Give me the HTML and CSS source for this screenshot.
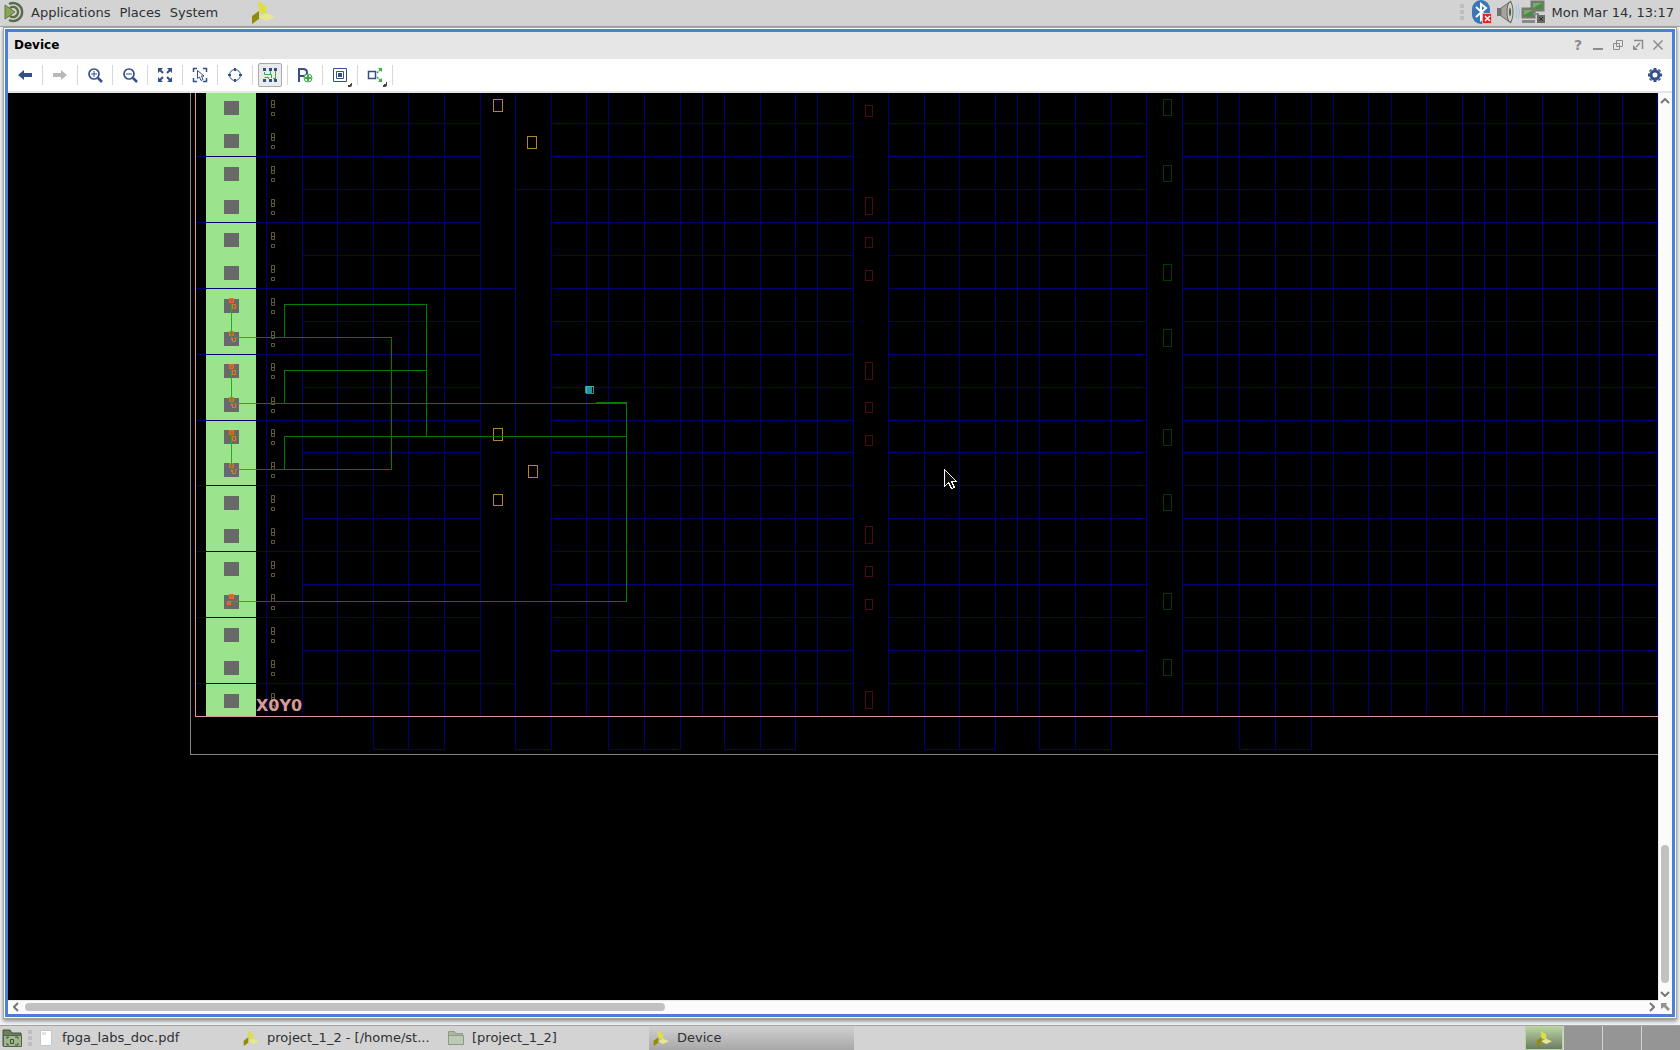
FILE: index.html
```html
<!DOCTYPE html>
<html lang="en">
<head>
<meta charset="utf-8">
<title>Device</title>
<link rel="stylesheet" href="styles.css">
</head>
<body>
<svg class="defs" aria-hidden="true">
  <defs>
    <symbol id="logo" viewBox="0 0 24 24">
      <path fill="#dcdf45" d="M7 1l8 5 1 9-8-3z"/>
      <path fill="#8f8d05" d="M1 16l7-5v8l-7 5z"/>
      <path fill="#e7e792" d="M8 17l7-4 9 4-9 4z"/>
    </symbol>
    <g id="box"><path d="M.5.5h3v4h-3zM.5 4.500h3v3h-3zM.5 12.500h3v3h-3z"/></g>
    <g id="pair"><path fill="#696969" d="M0 0h15v14H0z"/><use href="#box" class="bel" x="47" y="-1"/></g>
    <g id="pin"><path fill="#b8653a" stroke="#e07028" d="M.5.5h4v4h-4z"/><path fill="none" stroke="#e87722" d="M3.500 6.500h3v4h-3zM2.500 6v3"/></g>
  </defs>
</svg>

<header class="panel top">
  <nav class="menu">
    <svg class="mate" viewBox="0 0 22 22"><path d="M5 3a9 9 0 1 1 0 16M6 7a5 5 0 1 1 0 8" fill="none" stroke="#5c6b4c" stroke-width="2.500"/><path d="M1 4l10 7-10 7z" fill="#87a556" stroke="#5f7a3c"/></svg>
    <a href="#">Applications</a><a href="#">Places</a><a href="#">System</a>
    <svg class="launcher"><use href="#logo"/></svg>
  </nav>
  <div class="tray">
    <span class="grip"></span>
    <svg class="bt" viewBox="0 0 22 24"><rect x="1" y="0" width="18" height="24" rx="9" fill="#3b76b9"/><path d="M5 7l10 9-5 4V4l5 4-10 9" fill="none" stroke="#fff" stroke-width="2"/><path fill="#dc2626" stroke="#f5b5b5" d="M11.500 13.500h9v10h-9z"/><path d="M14 16l5 5m0-5l-5 5" stroke="#fff" stroke-width="1.500"/></svg>
    <svg class="snd" viewBox="0 0 24 24"><path d="M1 8h5v8H1z" fill="#737373"/><path d="M5 8l10-7v22L5 16z" fill="#a5a59f" stroke="#73736e"/><ellipse cx="14" cy="12" rx="3" ry="10" fill="#cfcfca" stroke="#66665f"/><ellipse cx="14" cy="12" rx="1" ry="4" fill="#55554f"/><path d="M20 6q2 6 0 12M22 4q3 8 0 16" fill="none" stroke="#a9c0e0"/></svg>
    <svg class="net" viewBox="0 0 24 24"><path d="M10.500 1.500h12v9h-12zM1.500 8.500h12v9h-12z" fill="#4d8a45" stroke="#777a73" stroke-width="2"/><path d="M3 10h9l-9 5zM12 3h9l-9 5z" fill="#79ab6c"/><path d="M1 20h13v3H1zM12 13h6v2h-6z" fill="#888a85"/><path d="M16 15h8v8h-8z" fill="#6a6c67"/><path d="M18 17l4 4m0-4l-4 4" stroke="#333"/></svg>
    <time>Mon Mar 14, 13:17</time>
  </div>
</header>

<main class="desktop">
  <section class="window">
    <div class="titlebar">
      <h1>Device</h1>
      <div class="controls">
        <button aria-label="Help"><b>?</b></button>
        <button aria-label="Minimize"><svg viewBox="0 0 12 12"><path d="M1 10h10" stroke-width="2"/></svg></button>
        <button aria-label="Restore"><svg viewBox="0 0 12 12"><path d="M4.500 1.500h6v6h-6zM1.500 4.500h6v6h-6z"/></svg></button>
        <button aria-label="Float"><svg viewBox="0 0 12 12"><path d="M2 1.500h8.500V10M8 4L4 8" stroke-width="1.500"/><path d="M1 6v5h5z" class="solid"/></svg></button>
        <button aria-label="Close"><svg viewBox="0 0 12 12"><path d="M1.500 1.500l9 9m0-9l-9 9" stroke-width="1.500"/></svg></button>
      </div>
    </div>

    <div class="toolbar">
      <div class="tool"><button aria-label="Back"><svg viewBox="0 0 16 16"><path class="f" d="M1 8l6-5v3h8v4H7v3z"/></svg></button></div>
      <div class="tool"><button aria-label="Forward" disabled><svg viewBox="0 0 16 16"><path fill="#b8b8b8" d="M15 8L9 3v3H1v4h8v3z"/></svg></button></div>
      <div class="tool"><button aria-label="Zoom In"><svg viewBox="0 0 16 16"><circle class="s" cx="7" cy="7" r="5" stroke-width="1.700"/><path class="s" d="M7 4v6M4 7h6"/><path class="s" stroke-width="2.500" d="M11 11l4 4"/></svg></button></div>
      <div class="tool"><button aria-label="Zoom Out"><svg viewBox="0 0 16 16"><circle class="s" cx="7" cy="7" r="5" stroke-width="1.700"/><path class="s" d="M4 7h6"/><path class="s" stroke-width="2.500" d="M11 11l4 4"/></svg></button></div>
      <div class="tool"><button aria-label="Zoom Fit"><svg viewBox="0 0 16 16"><path class="f" d="M1 1h5L1 6zM15 1v5l-5-5zM1 15v-5l5 5zM15 15h-5l5-5z"/><path class="s" stroke-width="2" d="M3 3l3 3M13 3l-3 3M3 13l3-3M13 13l-3-3"/></svg></button></div>
      <div class="tool"><button aria-label="Zoom to Selection"><svg viewBox="0 0 16 16"><path class="s" stroke-width="1.500" d="M1.500 5V1.500H5M11 1.500h3.500V5M1.500 11v3.500H5M11 14.500h3.500V11"/><path class="s" d="M5.500 3.500v8l2-1.500 1.500 3.500 2-1L9.500 9h2.500z"/></svg></button></div>
      <div class="tool"><button aria-label="Autofit Selection"><svg viewBox="0 0 16 16"><circle class="s" cx="8" cy="8" r="5.500"/><path class="s" stroke-width="2" d="M8 1v3M8 12v3M1 8h3M12 8h3"/></svg></button></div>
      <div class="tool"><button class="pressed" aria-label="Routing Resources"><svg viewBox="0 0 16 16"><path class="f" d="M1 1h3v3H1zM7 1h3v3H7zM12 1h3v3h-3zM1 12h3v3H1zM7 12h3v3H7zM12 12h3v3h-3z"/><path class="g" d="M2.500 5v2.500h7V11M2.500 10.500h4V12M5 10.500v-1M8.500 4v4M13.500 4v8M11 11.500h3"/></svg></button></div>
      <div class="tool"><button aria-label="Draw Pblock"><svg viewBox="0 0 16 16"><path class="s" stroke-width="2" d="M2 15V2h4q4 0 4 3.500T6 9H2"/><circle cx="11" cy="11" r="4" fill="#fff" stroke="#39a845"/><path class="g" stroke-width="2" d="M11 8v6M8 11h6"/></svg></button></div>
      <div class="tool"><button class="menu-btn" aria-label="Layers"><svg viewBox="0 0 16 16"><path class="s" d="M1.500 1.500h13v13h-13zM4.500 4.500h7v7h-7z"/><path class="f" d="M6 6h4v4H6z"/></svg></button></div>
      <div class="tool"><button class="menu-btn" aria-label="Connections"><svg viewBox="0 0 16 16"><path class="s" stroke-width="1.500" d="M1.500 4.500h7v7h-7z"/><path class="g" stroke-width="1.500" stroke-dasharray="2 1" d="M10 6l4-4M10 10l4 4"/><path fill="#39b045" d="M11 1h4v4zM15 11v4h-4z"/></svg></button></div>
      <button class="settings" aria-label="Settings"><svg viewBox="0 0 16 16"><circle class="s" cx="8" cy="8" r="4" stroke-width="3"/><path class="s" stroke-width="3" d="M8 1v2M8 13v2M1 8h2M13 8h2M3 3l1 1M12 12l1 1M3 13l1-1M12 4l1-1"/></svg></button>
    </div>

    <div class="view">
      <div class="canvas">
        <svg class="device" role="img" aria-label="Device floorplan">
          <g transform="translate(-8 -93)">
            <path fill="#9be48c" d="M206 93h50v623h-50z"/>
            <g class="grid">
              <path d="M266.500 93V716M302.500 93V716M337.500 93V716M373.500 93V749M408.500 93V749M444.500 93V749M480.500 93V716M515.500 93V749M551.500 93V749M586.500 93V716M608.500 93V749M644.500 93V749M680.500 93V749M702.500 93V716M724.500 93V749M760.500 93V749M795.500 93V749M817.500 93V716M853.500 93V716M888.500 93V716M924.500 93V749M959.500 93V749M995.500 93V749M1017.500 93V716M1039.500 93V749M1075.500 93V749M1111.500 93V749M1146.500 93V716M1182.500 93V716M1217.500 93V716M1239.500 93V749M1275.500 93V749M1311.500 93V749M1333.500 93V716M1368.500 93V716M1391.500 93V716M1426.500 93V716M1462.500 93V716M1484.500 93V716M1506.500 93V716M1542.500 93V716M1577.500 93V716M1599.500 93V716M1622.500 93V716M1657.500 93V716"/>
              <path d="M373 749.500h72M515 749.500h37M608 749.500h73M724 749.500h72M924 749.500h72M1039 749.500h73M1239 749.500h73"/>
              <path d="M302 123.500H480M302 189.500H480M302 255.500H480M302 321.500H480M302 387.500H480M302 452.500H480M302 518.500H480M302 584.500H480M302 650.500H480"/>
              <path d="M195 156.500H480M195 222.500H480M195 288.500H515M195 354.500H480M195 420.500H480M195 485.500H480M195 551.500H480M195 617.500H480M195 683.500H515M515 189.500h36"/>
              <path d="M551 123.500H853M551 156.500H853M551 189.500H853M551 222.500H853M551 255.500H853M551 288.500H853M551 321.500H853M551 354.500H853M551 387.500H853M551 420.500H853M551 452.500H853M551 485.500H853M551 518.500H853M551 551.500H853M551 584.500H853M551 617.500H853M551 650.500H853M551 683.500H853"/>
              <path d="M888 123.500h258M888 156.500h258M888 189.500h258M853 222.500h329M888 255.500h258M888 288.500h258M888 321.500h258M888 354.500h258M888 387.500h258M888 420.500h258M888 452.500h258M888 485.500h258M888 518.500h258M853 551.500h329M888 584.500h258M888 617.500h258M888 650.500h258M888 683.500h258"/>
              <path d="M1182 123.500h476M1182 156.500h476M1182 189.500h476M1182 222.500h476M1182 255.500h476M1182 288.500h476M1182 321.500h476M1182 354.500h476M1182 387.500h476M1182 420.500h476M1182 452.500h476M1182 485.500h476M1182 518.500h476M1182 551.500h476M1182 584.500h476M1182 617.500h476M1182 650.500h476M1182 683.500h476"/>
            </g>
            <use href="#pair" x="224" y="101"/><use href="#pair" x="224" y="134"/><use href="#pair" x="224" y="167"/><use href="#pair" x="224" y="200"/><use href="#pair" x="224" y="233"/><use href="#pair" x="224" y="266"/><use href="#pair" x="224" y="299"/><use href="#pair" x="224" y="332"/><use href="#pair" x="224" y="364"/><use href="#pair" x="224" y="398"/><use href="#pair" x="224" y="430"/><use href="#pair" x="224" y="463"/><use href="#pair" x="224" y="496"/><use href="#pair" x="224" y="529"/><use href="#pair" x="224" y="562"/><use href="#pair" x="224" y="595"/><use href="#pair" x="224" y="628"/><use href="#pair" x="224" y="661"/><use href="#pair" x="224" y="694"/>
            <use href="#pin" x="229" y="298"/><use href="#pin" x="229" y="331"/><use href="#pin" x="229" y="364"/><use href="#pin" x="229" y="397"/><use href="#pin" x="229" y="430"/><use href="#pin" x="229" y="463"/>
            <path fill="#c9682f" stroke="#e07028" d="M229.500 594.500h4v4h-4zM227.500 601.500h3v3h-3z"/>
            <path class="ram" d="M493.500 99.500h9v12h-9zM527.500 136.500h9v12h-9zM493.500 428.500h9v12h-9zM528.500 465.500h9v12h-9zM493.500 494.500h9v11h-9z"/>
            <path class="clk" d="M865.500 105.500h7v11h-7zM865.500 197.500h7v17h-7zM865.500 237.500h7v10h-7zM865.500 270.500h7v10h-7zM865.500 362.500h7v17h-7zM865.500 402.500h7v10h-7zM865.500 435.500h7v10h-7zM865.500 526.500h7v17h-7zM865.500 566.500h7v10h-7zM865.500 599.500h7v10h-7zM865.500 691.500h7v17h-7z"/>
            <path class="dsp" d="M1163.500 99.500h8v16h-8zM1163.500 165.500h8v16h-8zM1163.500 264.500h8v16h-8zM1163.500 329.500h8v17h-8zM1163.500 429.500h8v16h-8zM1163.500 494.500h8v16h-8zM1163.500 593.500h8v16h-8zM1163.500 659.500h8v16h-8z"/>
            <path class="net-line" d="M284.500 337V304.500H426.500V436M231 337.500H391.500V469.500H231M284.500 403V370.500H426M231 403.500H626M596 402.500H626.500V601.500H231M284.500 469V436.500H626"/>
            <path class="net-pin" d="M231.500 304V337M231.500 370V403M231.500 436V469M231 337.500h25M231 403.500h25M231 469.500h25M231 601.500h25"/>
            <path fill="#239393" d="M585 386h7v7h-7zM586 393h8v1h-8zM593 386h1v8h-1z"/><path fill="none" stroke="#37baba" d="M586.500 386v7M586 386.500h8"/>
            <path fill="none" stroke="#d89999" d="M195.500 93V716.500H1658"/>
            <path fill="none" stroke="#858585" d="M190.500 93V754.500H1658"/>
            <text x="256" y="711" class="region">X0Y0</text>
            <path d="M944.500 469.500v17l4-4 3 6 3-1-3-6h5z" fill="#111" stroke="#fff"/>
          </g>
        </svg>
      </div>
      <div class="scroll vertical">
        <svg viewBox="0 0 10 6"><path d="M1 5l4-4 4 4"/></svg>
        <span class="track"><span class="thumb"></span></span>
        <svg viewBox="0 0 10 6"><path d="M1 1l4 4 4-4"/></svg>
      </div>
      <div class="scroll horizontal">
        <svg viewBox="0 0 6 10"><path d="M5 1L1 5l4 4"/></svg>
        <span class="track"><span class="thumb"></span></span>
        <svg viewBox="0 0 6 10"><path d="M1 1l4 4-4 4"/></svg>
      </div>
      <button class="corner" aria-label="World view"><svg viewBox="0 0 10 10"><path d="M1 1h6L6 3l4 4-2 2-4-4-3 2z" fill="#929292"/></svg></button>
    </div>
  </section>
</main>

<footer class="panel bottom">
  <button class="show" aria-label="Show Desktop"><svg viewBox="0 0 20 20"><path d="M1 2h7l2 3h9v13H1z" fill="#6b8059" stroke="#40543a"/><path d="M1.500 7.500h18v11h-18z" fill="#9fb58d" stroke="#50664a"/><path d="M5 11V9h2M13 9h3v2M5 15v2h2M13 17h3v-2M8.500 11.500h3v4h-3z" fill="none" stroke="#40543a"/></svg></button>
  <span class="grip"></span>
  <button class="task"><svg viewBox="0 0 16 16"><path d="M2.500.5h11v15h-11z" fill="#fff" stroke="#c6c6c6"/><path d="M4 2h4v3H4z" fill="#e4e4e4"/></svg>fpga_labs_doc.pdf</button>
  <button class="task"><svg><use href="#logo"/></svg>project_1_2 - [/home/st...</button>
  <button class="task"><svg viewBox="0 0 16 16"><path d="M.5 1.500h6l1 2h7v11H.5z" fill="#a9b8a0" stroke="#8d9b86"/><path d="M.5 5.500h15v9H.5z" fill="#bccab3" stroke="#8d9b86"/></svg>[project_1_2]</button>
  <button class="task active"><svg><use href="#logo"/></svg>Device</button>
  <div class="pager">
    <button class="current" aria-label="Workspace 1"><svg><use href="#logo"/></svg></button>
    <button aria-label="Workspace 2"></button>
    <button aria-label="Workspace 3"></button>
    <button aria-label="Workspace 4"></button>
  </div>
</footer>
</body>
</html>
```
FILE: styles.css
```css
* { box-sizing: border-box; }

body {
  margin: 0;
  height: 100vh;
  display: flex;
  flex-direction: column;
  overflow: hidden;
  background: #f4f4f4;
  color: #2e3033;
  font-family: "DejaVu Sans", sans-serif;
  font-size: 13px;
}

.defs { position: absolute; width: 0; height: 0; }
svg { display: block; flex: none; }
button { border: 0; padding: 0; background: none; font: inherit; color: inherit; }

.panel { display: flex; align-items: center; background: #d3d3d3; flex: none; }
.top { height: 27px; border-bottom: 1px solid #a2a2a2; justify-content: space-between; padding: 0 4px 2px; }
.menu, .tray { display: flex; align-items: center; }
.menu a { color: inherit; text-decoration: none; margin-right: 9px; }
.mate { width: 22px; height: 22px; margin-right: 5px; }
.launcher { width: 24px; height: 24px; margin-left: 24px; }
.grip {
  width: 4px;
  height: 16px;
  background: repeating-linear-gradient(#bdbdbd 0 4px, transparent 4px 6px);
}
.tray .grip { margin-right: 7px; }
.bt { width: 22px; height: 24px; margin-right: 3px; }
.snd { width: 24px; height: 24px; }
.net { width: 24px; height: 24px; margin-left: 1px; margin-right: 7px; }
time { padding-right: 2px; }

.desktop {
  flex: 1;
  min-height: 0;
  display: flex;
  padding: 2px 5px 8px;
}
.window {
  flex: 1;
  min-width: 0;
  display: flex;
  flex-direction: column;
  border: 3px solid #4a7fd3;
  box-shadow: 0 0 0 1px #fff, 0 0 0 2px #a0a5a0, 0 2px 4px 2px #888;
  background: #fff;
}

.titlebar {
  flex: none;
  height: 27px;
  display: flex;
  align-items: center;
  justify-content: space-between;
  background: #e6e6e6;
  padding: 0 4px 2px 6px;
}
.titlebar h1 { margin: 0; font-size: 12px; font-weight: bold; color: #000; }
.controls { display: flex; }
.controls button { width: 20px; height: 20px; display: grid; place-items: center; color: #8c8c8c; }
.controls svg { width: 12px; height: 12px; fill: none; stroke: #8c8c8c; }
.controls .solid { fill: #8c8c8c; stroke: none; }
.controls b { font-size: 14px; }

.toolbar {
  flex: none;
  height: 34px;
  display: flex;
  align-items: center;
  border-bottom: 2px solid #e6e6e6;
}
.tool { width: 35px; height: 20px; display: flex; align-items: center; justify-content: center; border-right: 1px solid #d8d8d8; }
.tool button { flex: none; width: 24px; height: 24px; display: grid; place-items: center; border-radius: 2px; }
.tool .pressed { background: #ebebeb; border: 1px solid #aaa; }
.tool .menu-btn { background: linear-gradient(135deg, transparent 50%, #444 50%) right bottom / 5px 5px no-repeat; }
.toolbar svg { width: 16px; height: 16px; }
.settings { margin-left: auto; margin-right: 9px; }
.f { fill: #33508a; }
.s { fill: none; stroke: #33508a; }
.g { fill: none; stroke: #39a845; }

.view {
  flex: 1;
  min-height: 0;
  display: grid;
  grid-template: minmax(0, 1fr) 14px / minmax(0, 1fr) 14px;
  background: #fbfbfb;
}
.canvas { background: #000; overflow: hidden; }
.device { width: 100%; height: 100%; }
.device path { shape-rendering: crispEdges; }
.grid path { stroke: #000074; fill: none; }
.bel { fill: none; stroke: #655832; }
.ram { fill: none; stroke: #b58230; }
.clk { fill: none; stroke: #4c0815; }
.dsp { fill: none; stroke: #003c00; }
.net-line { fill: none; stroke: #007c00; }
.net-pin { fill: none; stroke: #22b022; }
.region { fill: #d89999; font: bold 16px "DejaVu Sans", sans-serif; }

.scroll { display: flex; align-items: center; }
.scroll svg { fill: none; stroke: #777; stroke-width: 2; }
.vertical { flex-direction: column; padding: 5px 1px 3px 0; border-left: 1px solid #e8e8e8; }
.vertical svg { width: 10px; height: 6px; }
.horizontal { padding: 0 3px 1px 5px; border-top: 1px solid #e8e8e8; }
.horizontal svg { width: 6px; height: 10px; }
.track { flex: 1; display: flex; }
.horizontal .track { margin: 0 5px 0 6px; }
.vertical .track { flex-direction: column; justify-content: flex-end; margin: 6px 0 8px; }
.thumb { background: #c1c1c1; border-radius: 4px; }
.horizontal .thumb { height: 8px; width: 39.5%; }
.vertical .thumb { width: 8px; height: 15.8%; }
.corner { display: grid; place-items: center; }
.corner svg { width: 10px; height: 10px; }

.bottom { height: 25px; border-top: 1px solid #a2a2a2; }
.show { width: 20px; margin: 0 6px 0 2px; }
.show svg { width: 20px; height: 20px; }
.bottom .grip { margin-right: 2px; }
.task {
  width: 205px;
  height: 24px;
  display: flex;
  align-items: center;
  gap: 8px;
  padding: 0 4px 1px;
  white-space: nowrap;
}
.task svg { width: 16px; height: 16px; }
.task.active { background: linear-gradient(#d0d0d0, #a8a8a8); }
.pager { margin-left: auto; display: flex; gap: 1px; height: 24px; }
.pager button { width: 38px; background: #959595; }
.pager .current { display: grid; place-items: center; border: 1px solid #b5d89a; background: linear-gradient(#b9d3a3, #6d7b64); }
.pager svg { width: 16px; height: 16px; }
```
